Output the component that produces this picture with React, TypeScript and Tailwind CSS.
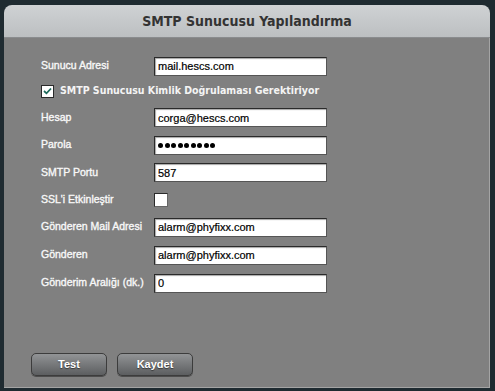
import React from "react";

const labelFont = { fontFamily: '"Liberation Sans", Arial, sans-serif' };

function Row({ h, label, children }: { h: string; label: string; children: React.ReactNode }) {
  return (
    <div className={`flex items-center ${h}`}>
      <div className="w-[113px] shrink-0 text-[10.5px] text-[#f8f8f8] [-webkit-text-stroke:0.35px_#f8f8f8]" style={labelFont}>
        {label}
      </div>
      {children}
    </div>
  );
}

const boxCls =
  "w-[173px] h-[19px] bg-white border border-t-[#2a2a2a] border-l-[#2a2a2a] border-r-[#555] border-b-[#555] px-[3px] text-[11px] text-black outline-none shadow-[inset_1px_1px_1px_rgba(0,0,0,0.35)] [-webkit-text-stroke:0.2px_#000]";

function TextBox({ value }: { value: string }) {
  return <input readOnly type="text" defaultValue={value} className={boxCls} style={labelFont} />;
}

function PasswordBox() {
  return (
    <div className={`${boxCls} flex items-center gap-[1.5px]`}>
      {Array.from({ length: 9 }).map((_, i) => (
        <span key={i} className="block h-[5px] w-[5px] rounded-full bg-black" />
      ))}
    </div>
  );
}

export default function App() {
  return (
    <div className="w-[495px] h-[391px] bg-[#1f2b31] pt-[5px] pl-[4px] pr-[5px] pb-[3px]">
      <div className="flex h-full flex-col">
        <div className="flex h-[33px] shrink-0 items-center justify-center rounded-t-[8px] bg-gradient-to-b from-[#cfd2d4] to-[#bcbfc1] border-b border-[#8a8c8e]">
          <span
            className="text-[14px] font-bold text-[#333]"
            style={{ fontFamily: '"DejaVu Sans Condensed", "DejaVu Sans", Tahoma, sans-serif' }}
          >
            SMTP Sunucusu Yapılandırma
          </span>
        </div>
        <div className="flex flex-1 flex-col bg-[#808080] border-r border-b border-[#a4a4a4] pl-[37px] pt-[16px] pb-[11px]">
          <Row h="h-[24px]" label="Sunucu Adresi">
            <TextBox value="mail.hescs.com" />
          </Row>
          <div className="flex h-[26px] items-center">
            <div className="flex h-[13px] w-[13px] items-center justify-center bg-white border border-[#2a2a2a]">
              <svg width="9" height="8" viewBox="0 0 9 8">
                <path d="M1 4 L3.5 6.3 L8 1.5" fill="none" stroke="#1e6b5c" strokeWidth="1.8" />
              </svg>
            </div>
            <span
              className="ml-[6px] text-[10.5px] font-bold text-[#f4f4f4]"
              style={{ fontFamily: '"DejaVu Sans Condensed", "DejaVu Sans", Tahoma, sans-serif' }}
            >
              SMTP Sunucusu Kimlik Doğrulaması Gerektiriyor
            </span>
          </div>
          <Row h="h-[27px]" label="Hesap">
            <TextBox value="corga@hescs.com" />
          </Row>
          <Row h="h-[28px]" label="Parola">
            <PasswordBox />
          </Row>
          <Row h="h-[27px]" label="SMTP Portu">
            <TextBox value="587" />
          </Row>
          <Row h="h-[27px]" label="SSL'i Etkinleştir">
            <div className="h-[14px] w-[14px] bg-white border border-t-[#2a2a2a] border-l-[#2a2a2a] border-r-[#666] border-b-[#666]" />
          </Row>
          <Row h="h-[28px]" label="Gönderen Mail Adresi">
            <TextBox value="alarm@phyfixx.com" />
          </Row>
          <Row h="h-[28px]" label="Gönderen">
            <TextBox value="alarm@phyfixx.com" />
          </Row>
          <Row h="h-[28px]" label="Gönderim Aralığı (dk.)">
            <TextBox value="0" />
          </Row>
          <div className="mt-auto -ml-[10px] flex gap-[10px]">
            {["Test", "Kaydet"].map((t) => (
              <button
                key={t}
                className="h-[23px] w-[76px] rounded-[5px] border border-[#3c3c3c] bg-gradient-to-b from-[#929496] to-[#5c5e60] text-[11px] font-bold text-white [text-shadow:0_1px_1px_rgba(0,0,0,0.5)] shadow-[0_1px_0_rgba(0,0,0,0.4)]"
                style={labelFont}
              >
                {t}
              </button>
            ))}
          </div>
        </div>
      </div>
    </div>
  );
}
